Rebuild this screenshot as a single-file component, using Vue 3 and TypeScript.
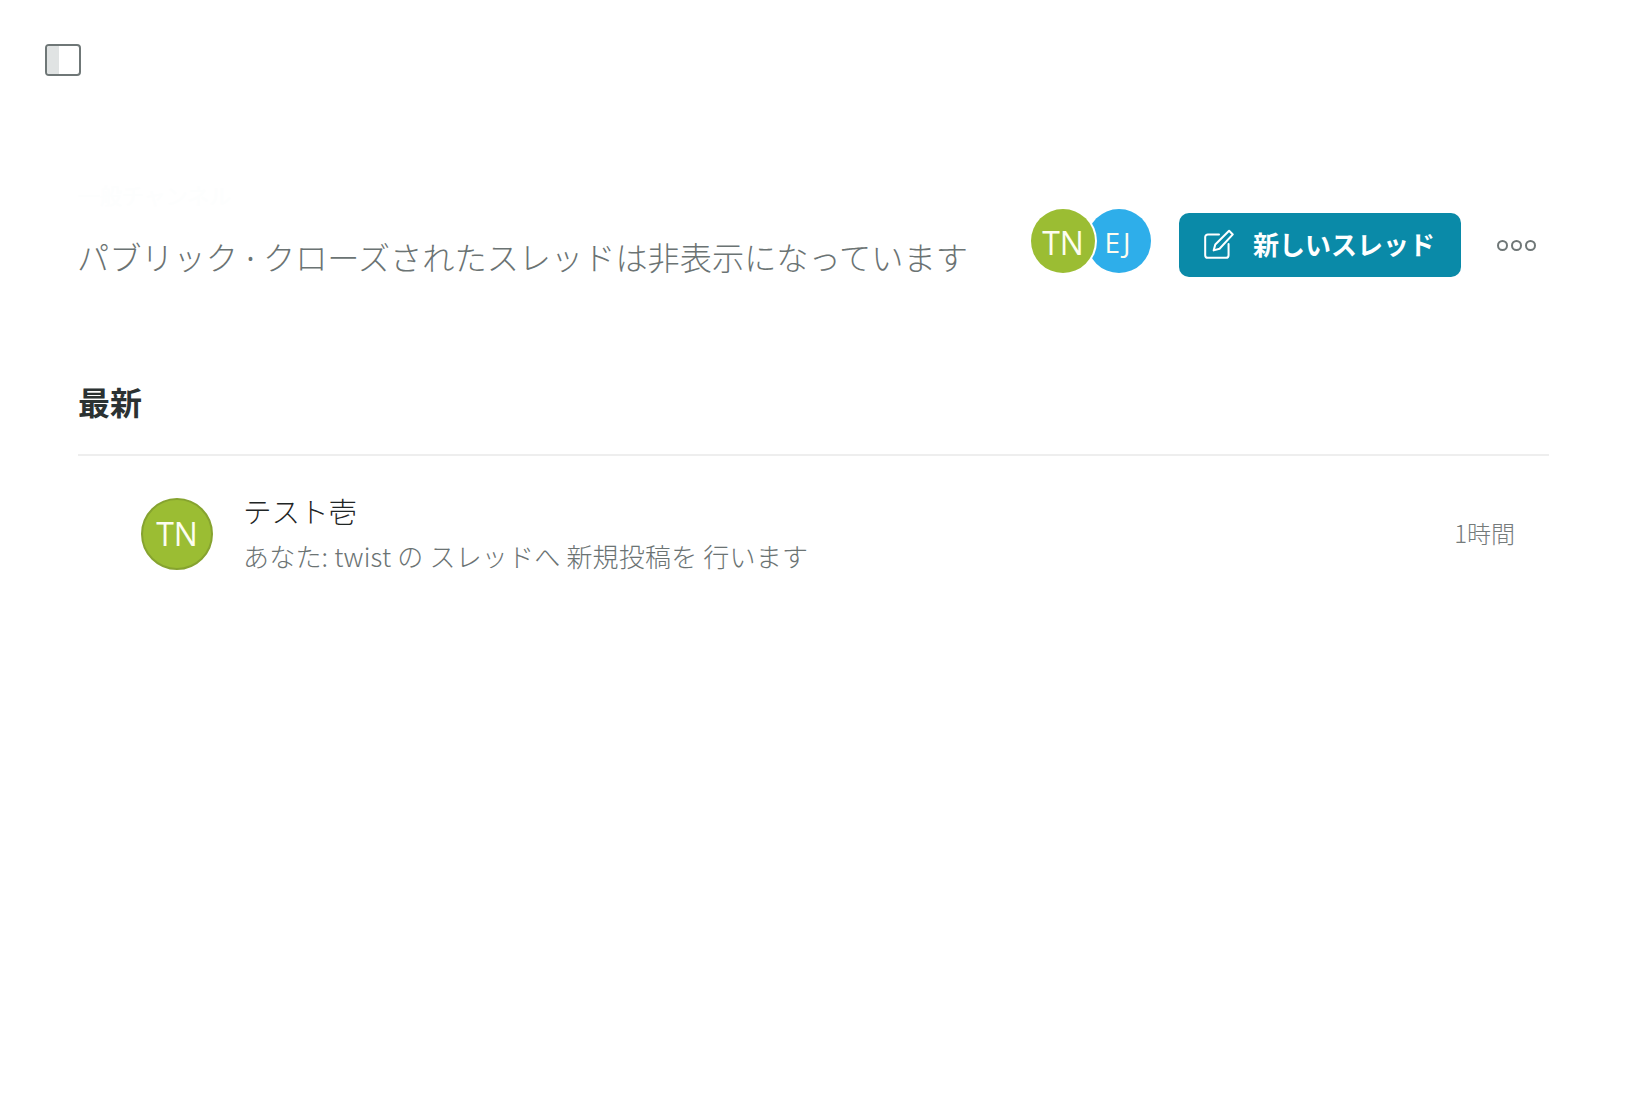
<script setup lang="ts">
interface ThreadRow {
  initials: string
  title: string
  preview: string
  age: string
}

const members = [
  { initials: 'TN', cls: 'green' },
  { initials: 'EJ', cls: 'blue' },
]

const threads: ThreadRow[] = [
  { initials: 'TN', title: 'テスト壱', preview: 'あなた: twist の スレッドへ 新規投稿を 行います', age: '1時間' },
]
</script>

<template>
  <div class="page">
    <button class="sidebar-toggle" aria-label="toggle"><span class="pane"></span></button>
    <header class="channel-head">
      <div class="head-text">
        <div class="channel-name">一般チャンネル</div>
        <p class="channel-desc">パブリック<span class="dot"> · </span>クローズされたスレッドは非表示になっています</p>
      </div>
      <div class="members">
        <span v-for="m in members" :key="m.initials" class="member" :class="m.cls">{{ m.initials }}</span>
      </div>
      <button class="new-thread">
        <svg width="34" height="34" viewBox="0 0 32 32" fill="none" stroke="#fff" stroke-width="1.9" stroke-linecap="round" stroke-linejoin="round">
          <path d="M16 7H5.500A2.500 2.500 0 0 0 3 9.500V26.500A2.500 2.500 0 0 0 5.500 29H22.500A2.500 2.500 0 0 0 25 26.500V16" />
          <path d="M25.500 3.500L29 7L16.500 20.500L11 22L12.500 16.500Z" />
        </svg>
        <span>新しいスレッド</span>
      </button>
      <div class="more" aria-label="more"><i></i><i></i><i></i></div>
    </header>
    <section class="latest">
      <h2>最新</h2>
      <div v-for="t in threads" :key="t.title" class="thread">
        <span class="thread-avatar">{{ t.initials }}</span>
        <div class="thread-body">
          <div class="thread-title">{{ t.title }}</div>
          <div class="thread-preview">{{ t.preview }}</div>
        </div>
        <span class="thread-age">{{ t.age }}</span>
      </div>
    </section>
  </div>
</template>

<style>
html, body { background: #fff; }
</style>

<style scoped>
.page { min-height: 1094px; box-sizing: border-box; padding: 44px 92px 0 78px; font-family: "Noto Sans CJK JP", "Noto Sans", sans-serif; }
.sidebar-toggle { display: block; width: 36px; height: 32px; margin-left: -33px; padding: 0; box-sizing: border-box; background: #fff; border: 2px solid #6f7777; border-radius: 4px; overflow: hidden; }
.pane { display: block; width: 12px; height: 100%; background: #e0e3e3; }
.channel-head { display: flex; align-items: flex-start; margin-top: 106px; padding-right: 13px; }
.head-text { flex: 1; min-width: 0; }
.channel-name { font-size: 22px; line-height: 24px; color: #fdfefe; }
.channel-desc { margin: 27px 0 0 -1px; font-size: 32.2px; font-weight: 300; line-height: 46px; color: #6b7373; }
.dot { font-family: "Open Sans", sans-serif; font-size: 32px; font-weight: 400; }
.members { display: flex; margin-top: 27px; }
.member { width: 64px; height: 64px; border-radius: 50%; display: flex; align-items: center; justify-content: center; box-sizing: border-box; padding-top: 2px; color: #fdfdf0; font-size: 32px; font-family: "Open Sans", sans-serif; }
.member.green { background: #9bbd33; position: relative; z-index: 1; box-shadow: 0 0 0 2px #fff; }
.member.blue { background: #2eaeea; margin-left: -8px; font-size: 28px; letter-spacing: 3px; }
.new-thread { display: flex; align-items: center; gap: 17px; width: 282px; height: 64px; margin: 31px 0 0 28px; padding: 0 0 3px 23px; box-sizing: border-box; border: none; border-radius: 10px; background: #0a8aa8; color: #fff; font: 700 26px "Noto Sans CJK JP", sans-serif; }
.more { display: flex; gap: 3px; margin: 58px 0 0 36px; }
.more i { display: block; width: 11px; height: 11px; box-sizing: border-box; border: 2px solid #6f7777; border-radius: 50%; }
.latest { margin-top: 97px; }
.latest h2 { margin: 0; padding-bottom: 30px; font-size: 32px; font-weight: 700; line-height: 46px; color: #2b3232; border-bottom: 2px solid #eeeeee; }
.thread { display: flex; align-items: center; padding: 37px 34px 0 63px; }
.thread-avatar { width: 72px; height: 72px; flex: none; border-radius: 50%; display: flex; align-items: center; justify-content: center; box-sizing: border-box; padding-bottom: 2px; border: 2px solid #86a32f; background: #9bbd33; color: #fdfdf0; font-size: 32px; font-family: "Open Sans", sans-serif; }
.thread-body { flex: 1; margin-left: 30px; min-width: 0; }
.thread-title { font-size: 28.5px; line-height: 40px; font-weight: 300; color: #1f2525; margin-top: -2px; }
.thread-preview { font-size: 26px; line-height: 38px; margin-top: 6px; font-weight: 300; letter-spacing: 0.2px; color: #6b7373; }
.thread-age { font-size: 24px; line-height: 34px; padding-bottom: 2px; font-weight: 300; color: #757b7b; }
</style>
